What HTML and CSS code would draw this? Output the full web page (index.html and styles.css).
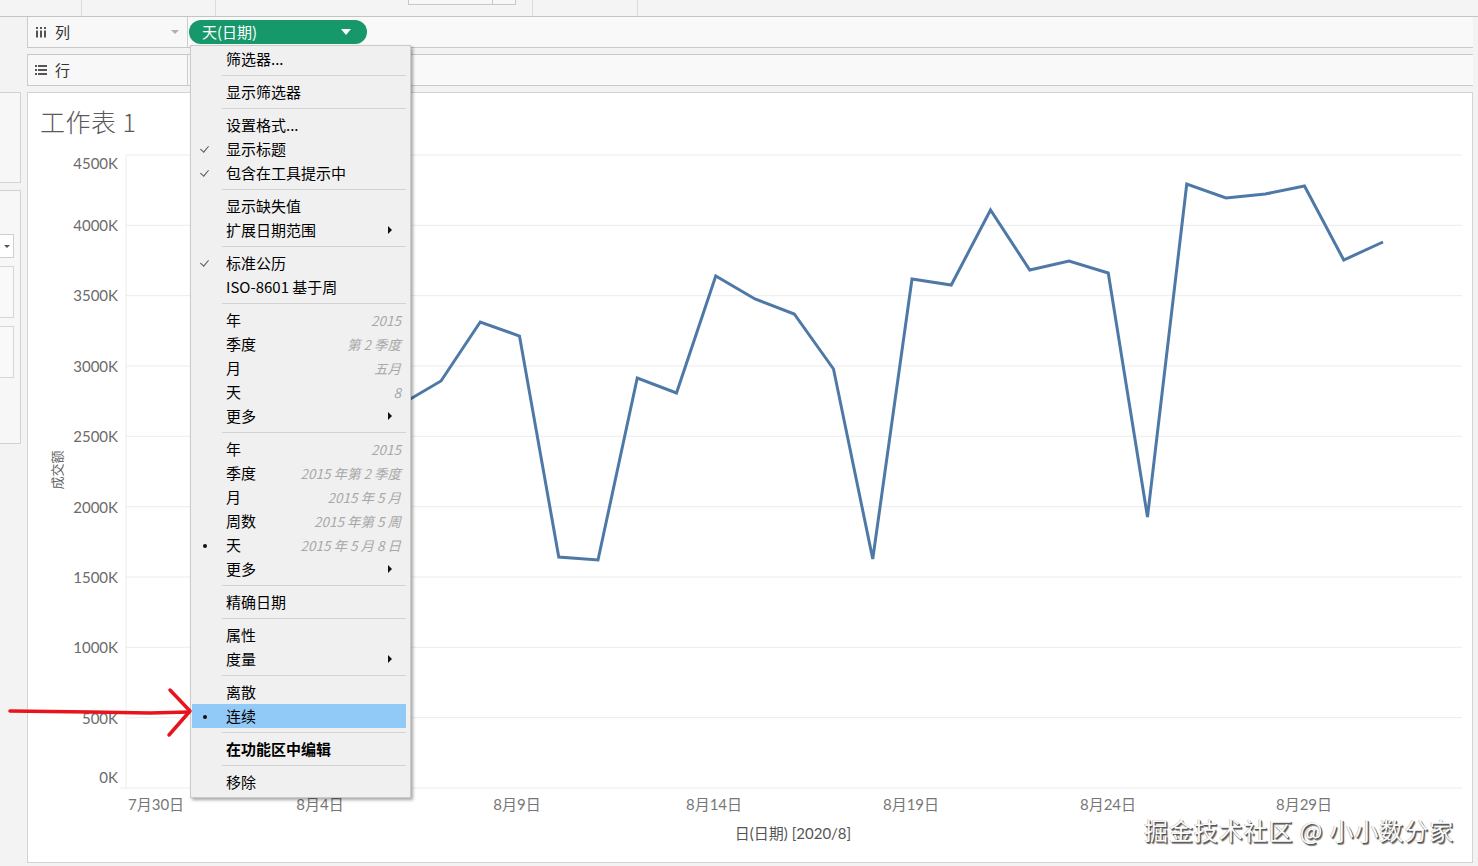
FILE: index.html
```html
<!DOCTYPE html>
<html lang="zh-CN">
<head>
<meta charset="utf-8">
<title>工作表 1</title>
<link rel="stylesheet" href="styles.css">
</head>
<body>
<div class="app">
  <div class="topbar">
    <div class="tb-seg tb-a"></div>
    <div class="tb-seg tb-b"></div>
    <div class="tb-seg tb-c"><div class="tb-btn"><span class="tb-btn-part"></span></div></div>
    <div class="tb-seg tb-d"></div>
  </div>

  <div class="body">
    <aside class="side">
      <div class="side-box side-box1"></div>
      <div class="side-box side-box2">
        <div class="side-dd"><span class="side-caret"></span></div>
        <div class="side-field"></div>
        <div class="side-field"></div>
      </div>
    </aside>

    <main class="workspace">
      <div class="shelf shelf-cols">
        <div class="shelf-label">
          <svg class="shelf-icon" viewBox="0 0 12 11" width="12" height="11">
            <rect x="1" y="0" width="2" height="2" fill="#555"/>
            <rect x="1" y="3.5" width="2" height="7" fill="#555"/>
            <rect x="5" y="0" width="2" height="2" fill="#555"/>
            <rect x="5" y="3.5" width="2" height="7" fill="#555"/>
            <rect x="9" y="0" width="2" height="2" fill="#555"/>
            <rect x="9" y="3.5" width="2" height="7" fill="#555"/>
          </svg>
          <span class="shelf-name">列</span>
          <span class="shelf-caret"></span>
        </div>
        <div class="shelf-drop">
          <div class="pill"><span class="pill-text">天(日期)</span><span class="pill-caret"></span></div>
        </div>
      </div>

      <div class="shelf shelf-rows">
        <div class="shelf-label">
          <svg class="shelf-icon" viewBox="0 0 12 10" width="12" height="10">
            <rect x="0" y="0" width="2" height="2" fill="#555"/>
            <rect x="3" y="0" width="9" height="2" fill="#555"/>
            <rect x="0" y="4" width="2" height="2" fill="#555"/>
            <rect x="3" y="4" width="9" height="2" fill="#555"/>
            <rect x="0" y="8" width="2" height="2" fill="#555"/>
            <rect x="3" y="8" width="9" height="2" fill="#555"/>
          </svg>
          <span class="shelf-name">行</span>
        </div>
        <div class="shelf-drop"></div>
      </div>

      <section class="chart">
        <div class="sheet-title">工作表 1</div>
        <svg class="plot" width="1444" height="721" viewBox="0 0 1444 721">
          <g transform="translate(-28,-140)">
            <g class="grid">
              <line x1="126" y1="155" x2="1462" y2="155"/>
              <line x1="126" y1="225.3" x2="1462" y2="225.3"/>
              <line x1="126" y1="295.7" x2="1462" y2="295.7"/>
              <line x1="126" y1="366" x2="1462" y2="366"/>
              <line x1="126" y1="436.3" x2="1462" y2="436.3"/>
              <line x1="126" y1="506.7" x2="1462" y2="506.7"/>
              <line x1="126" y1="577" x2="1462" y2="577"/>
              <line x1="126" y1="647.3" x2="1462" y2="647.3"/>
              <line x1="126" y1="717.7" x2="1462" y2="717.7"/>
              <line x1="120" y1="788" x2="1462" y2="788"/>
              <line x1="126" y1="155" x2="126" y2="790"/>
            </g>
            <g class="ytick">
              <text x="118" y="169">4500K</text>
              <text x="118" y="231">4000K</text>
              <text x="118" y="301">3500K</text>
              <text x="118" y="372">3000K</text>
              <text x="118" y="442">2500K</text>
              <text x="118" y="513">2000K</text>
              <text x="118" y="583">1500K</text>
              <text x="118" y="653">1000K</text>
              <text x="118" y="724">500K</text>
              <text x="118" y="783">0K</text>
            </g>
            <text class="ytitle" transform="translate(62,470) rotate(-90)">成交额</text>
            <g class="xtick">
              <text x="128" y="810" class="xstart">7月30日</text>
              <text x="320" y="810">8月4日</text>
              <text x="517" y="810">8月9日</text>
              <text x="714" y="810">8月14日</text>
              <text x="911" y="810">8月19日</text>
              <text x="1108" y="810">8月24日</text>
              <text x="1304" y="810">8月29日</text>
            </g>
            <text class="xtitle" x="793" y="839">日(日期) [2020/8]</text>
            <polyline class="series" points="205.5,430 244.75,400 284,450 323.25,420 362.5,470 401.75,404 441,381 480.25,322 519.5,336 558.75,557 598,560 637.25,378 676.5,393 715.75,276 755,299 794.25,314 833.5,369 872.75,559 912,279 951.25,285 990.5,210 1029.75,270 1069,261 1108.25,273 1147.5,517 1186.75,184 1226,198 1265.25,194 1304.5,186 1343.75,260 1383,242"/>
          </g>
        </svg>
      </section>
    </main>
  </div>

  <div class="menu">
    <div class="mi"><span class="mt">筛选器...</span></div>
    <div class="sep"></div>
    <div class="mi"><span class="mt">显示筛选器</span></div>
    <div class="sep"></div>
    <div class="mi"><span class="mt">设置格式...</span></div>
    <div class="mi"><span class="mark check"></span><span class="mt">显示标题</span></div>
    <div class="mi"><span class="mark check"></span><span class="mt">包含在工具提示中</span></div>
    <div class="sep"></div>
    <div class="mi"><span class="mt">显示缺失值</span></div>
    <div class="mi"><span class="mt">扩展日期范围</span><span class="sub"></span></div>
    <div class="sep"></div>
    <div class="mi"><span class="mark check"></span><span class="mt">标准公历</span></div>
    <div class="mi"><span class="mt">ISO-8601 基于周</span></div>
    <div class="sep"></div>
    <div class="mi"><span class="mt">年</span><span class="hint">2015</span></div>
    <div class="mi"><span class="mt">季度</span><span class="hint">第 2 季度</span></div>
    <div class="mi"><span class="mt">月</span><span class="hint">五月</span></div>
    <div class="mi"><span class="mt">天</span><span class="hint">8</span></div>
    <div class="mi"><span class="mt">更多</span><span class="sub"></span></div>
    <div class="sep"></div>
    <div class="mi"><span class="mt">年</span><span class="hint">2015</span></div>
    <div class="mi"><span class="mt">季度</span><span class="hint">2015 年第 2 季度</span></div>
    <div class="mi"><span class="mt">月</span><span class="hint">2015 年 5 月</span></div>
    <div class="mi"><span class="mt">周数</span><span class="hint">2015 年第 5 周</span></div>
    <div class="mi"><span class="mark dot"></span><span class="mt">天</span><span class="hint">2015 年 5 月 8 日</span></div>
    <div class="mi"><span class="mt">更多</span><span class="sub"></span></div>
    <div class="sep"></div>
    <div class="mi"><span class="mt">精确日期</span></div>
    <div class="sep"></div>
    <div class="mi"><span class="mt">属性</span></div>
    <div class="mi"><span class="mt">度量</span><span class="sub"></span></div>
    <div class="sep"></div>
    <div class="mi"><span class="mt">离散</span></div>
    <div class="mi mi-active"><span class="mark dot"></span><span class="mt">连续</span></div>
    <div class="sep"></div>
    <div class="mi mi-bold"><span class="mt">在功能区中编辑</span></div>
    <div class="sep"></div>
    <div class="mi"><span class="mt">移除</span></div>
  </div>

  <svg class="annot-arrow" width="200" height="60" viewBox="0 680 200 60">
    <path d="M10,711 L90,712 L150,713 L189,712" />
    <path d="M170,690 L190,711 L169,735" />
  </svg>

  <div class="watermark">掘金技术社区 @ 小小数分家</div>
</div>
</body>
</html>
```

FILE: styles.css
```css
* { box-sizing: border-box; }

html, body {
  margin: 0;
  padding: 0;
}

body {
  background: #f3f3f3;
  font-family: "Noto Sans CJK SC", "Noto Sans", sans-serif;
  color: #222;
}

.app {
  position: relative;
  width: 1478px;
  height: 866px;
  overflow: hidden;
  background: #f3f3f3;
}

/* ---------- top toolbar remnant ---------- */
.topbar {
  height: 17px;
  border-bottom: 1px solid #c4c4c4;
  background: #f4f4f4;
  display: flex;
}
.tb-seg { height: 16px; border-right: 1px solid #dcdcdc; }
.tb-a { width: 82px; }
.tb-b { width: 134px; }
.tb-c { width: 317px; position: relative; }
.tb-d { width: 105px; }
.tb-btn {
  margin-left: 192px;
  width: 108px;
  height: 5px;
  border: 1px solid #c8c8c8;
  border-top: none;
  background: #f7f7f7;
  display: flex;
  justify-content: flex-end;
}
.tb-btn-part { width: 23px; border-left: 1px solid #c8c8c8; }

/* ---------- body ---------- */
.body {
  display: flex;
  height: 849px;
}

.side {
  width: 21px;
  flex: none;
  display: flex;
  flex-direction: column;
}
.side-box {
  margin-left: -2px;
  width: 23px;
  border: 1px solid #d2d2d2;
  background: #f7f7f7;
}
.side-box1 { margin-top: 75px; height: 91px; }
.side-box2 { margin-top: 7px; height: 254px; padding-top: 43px; }
.side-dd {
  width: 15px;
  height: 24px;
  border: 1px solid #cfcfcf;
  border-left: none;
  background: #fff;
  display: flex;
  align-items: center;
  justify-content: flex-end;
  padding-right: 3px;
}
.side-caret {
  width: 0; height: 0;
  border-left: 3px solid transparent;
  border-right: 3px solid transparent;
  border-top: 3px solid #555;
}
.side-field {
  margin-top: 8px;
  width: 15px;
  height: 52px;
  border: 1px solid #d6d6d6;
  border-left: none;
  background: #f9f9f9;
}

.workspace {
  margin-left: 6px;
  width: 1446px;
  display: flex;
  flex-direction: column;
}

/* ---------- shelves ---------- */
.shelf {
  display: flex;
  background: #f9f9f9;
  border-bottom: 1px solid #c9c9c9;
}
.shelf-cols { height: 31px; }
.shelf-rows { height: 32px; margin-top: 6px; border-top: 1px solid #c9c9c9; }

.shelf-label {
  width: 161px;
  flex: none;
  border-left: 1px solid #cdcdcd;
  border-right: 1px solid #cdcdcd;
  display: flex;
  align-items: center;
  padding-left: 7px;
  background: #f8f8f8;
}
.shelf-icon { flex: none; }
.shelf-name {
  margin-left: 8px;
  font-size: 15px;
  color: #333;
  line-height: 20px;
}
.shelf-caret {
  margin-left: auto;
  margin-right: 8px;
  width: 0; height: 0;
  border-left: 4px solid transparent;
  border-right: 4px solid transparent;
  border-top: 4px solid #b0b0b0;
}
.shelf-drop {
  flex: 1;
  display: flex;
  align-items: flex-start;
  padding-left: 1px;
}
.pill {
  margin-top: 3px;
  width: 178px;
  height: 24px;
  border-radius: 12px;
  background: #17986a;
  display: flex;
  align-items: center;
  padding-left: 13px;
  padding-right: 16px;
}
.pill-text {
  color: #fff;
  font-size: 15px;
  line-height: 20px;
}
.pill-caret {
  margin-left: auto;
  width: 0; height: 0;
  border-left: 5px solid transparent;
  border-right: 5px solid transparent;
  border-top: 6px solid #fff;
}

/* ---------- chart ---------- */
.chart {
  margin-top: 6px;
  height: 771px;
  background: #fff;
  border: 1px solid #d3d3d3;
}
.sheet-title {
  height: 47px;
  padding-left: 12px;
  padding-top: 11px;
  font-size: 25px;
  line-height: 34px;
  color: #5a5a5a;
  font-weight: 300;
  letter-spacing: 0.5px;
}
.plot { display: block; }

.grid line { stroke: #ececec; stroke-width: 1; }
.ytick text {
  font-family: Lato, "Noto Sans CJK SC", sans-serif;
  font-size: 15px;
  fill: #6b6b6b;
  text-anchor: end;
}
.ytitle {
  font-family: "Noto Sans CJK SC", sans-serif;
  font-size: 13px;
  fill: #666;
  text-anchor: middle;
}
.xtick text {
  font-family: Lato, "Noto Sans CJK SC", sans-serif;
  font-size: 15px;
  fill: #777;
  text-anchor: middle;
}
.xtick text.xstart { text-anchor: start; }
.xtitle {
  font-family: Lato, "Noto Sans CJK SC", sans-serif;
  font-size: 15px;
  fill: #555;
  text-anchor: middle;
}
.series {
  fill: none;
  stroke: #4e79a7;
  stroke-width: 3;
  stroke-linejoin: miter;
}

/* ---------- context menu ---------- */
.menu {
  position: absolute;
  left: 190px;
  top: 45px;
  width: 221px;
  height: 753px;
  background: #f0f0f0;
  border: 1px solid #cbcbcb;
  box-shadow: 2px 2px 3px rgba(0, 0, 0, 0.35);
  padding: 1px 4px 2px 1px;
  display: flex;
  flex-direction: column;
}
.mi {
  position: relative;
  height: 24px;
  display: flex;
  align-items: center;
  padding-left: 34px;
  padding-right: 5px;
  font-size: 15px;
  line-height: 20px;
  color: #000;
}
.mi-active { background: #91c9f7; }
.mi-bold { font-weight: bold; }
.mark {
  position: absolute;
  left: 8px;
  top: 7px;
  width: 10px;
  height: 10px;
}
.mark.check::after {
  content: "";
  position: absolute;
  left: 2px;
  top: 0px;
  width: 4px;
  height: 7px;
  border-right: 1.2px solid #555;
  border-bottom: 1.2px solid #555;
  transform: rotate(40deg);
}
.mark.dot::after {
  content: "";
  position: absolute;
  left: 3px;
  top: 4px;
  width: 4px;
  height: 4px;
  border-radius: 50%;
  background: #111;
}
.hint {
  margin-left: auto;
  font-size: 13.5px;
  font-style: italic;
  color: #a8a8a8;
}
.sub {
  margin-left: auto;
  margin-right: 9px;
  width: 0; height: 0;
  border-top: 4px solid transparent;
  border-bottom: 4px solid transparent;
  border-left: 4px solid #111;
}
.sep {
  height: 9px;
  margin-left: 30px;
  display: flex;
  align-items: center;
}
.sep::after {
  content: "";
  flex: 1;
  height: 1px;
  background: #d3d3d3;
}

/* ---------- overlays ---------- */
.annot-arrow {
  position: absolute;
  left: 0;
  top: 680px;
  overflow: visible;
}
.annot-arrow path {
  fill: none;
  stroke: #e8141c;
  stroke-width: 3.5;
  stroke-linecap: round;
  stroke-linejoin: round;
}

.watermark {
  position: absolute;
  left: 1144px;
  top: 819px;
  font-size: 24px;
  line-height: 22px;
  color: #fbfbfb;
  letter-spacing: 0.9px;
  text-shadow: 1px 1px 0 #555, 1.5px 1.5px 1px #777, -0.5px -0.5px 0 #aaa;
  white-space: nowrap;
}
```
